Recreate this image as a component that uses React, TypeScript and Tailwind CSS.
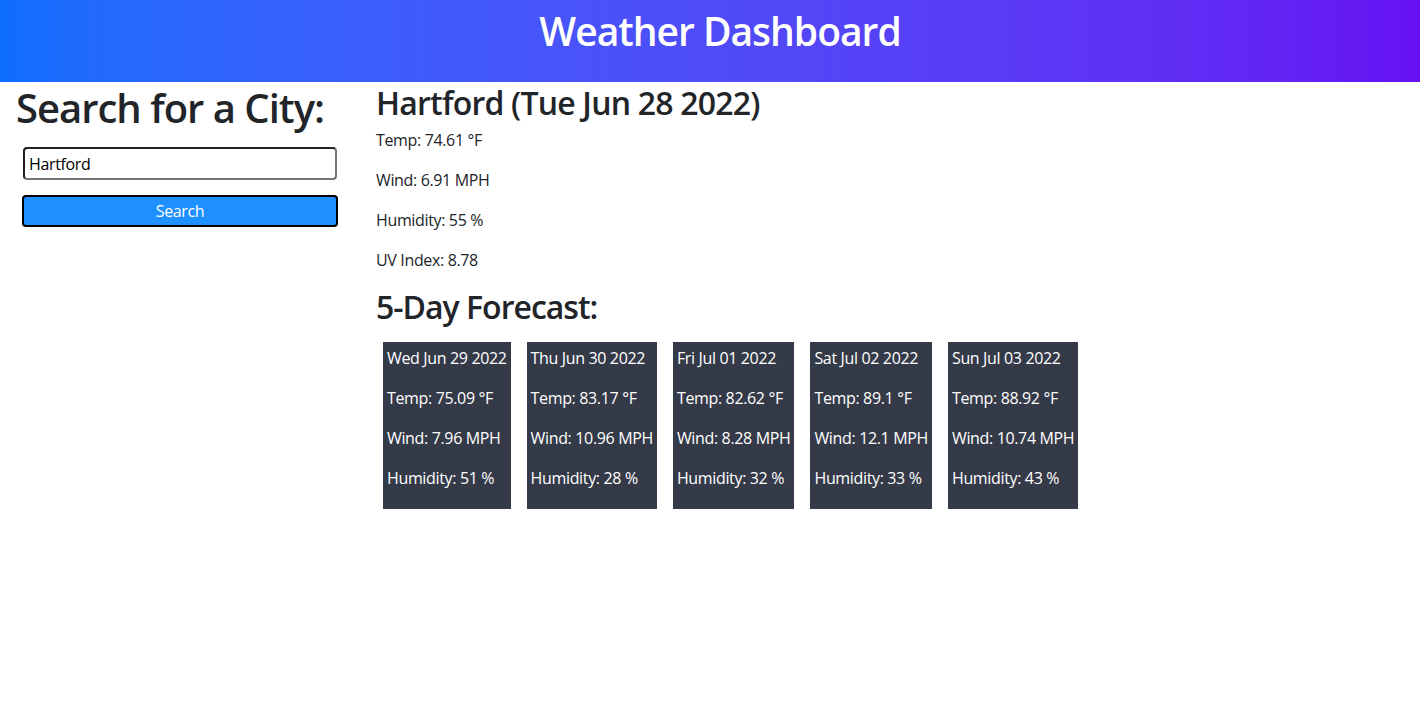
import React from 'react';

const forecast = [
  { date: 'Wed Jun 29 2022', temp: '75.09', wind: '7.96', humidity: '51' },
  { date: 'Thu Jun 30 2022', temp: '83.17', wind: '10.96', humidity: '28' },
  { date: 'Fri Jul 01 2022', temp: '82.62', wind: '8.28', humidity: '32' },
  { date: 'Sat Jul 02 2022', temp: '89.1', wind: '12.1', humidity: '33' },
  { date: 'Sun Jul 03 2022', temp: '88.92', wind: '10.74', humidity: '43' },
];

const App: React.FC = () => {
  return (
    <div className="min-h-screen bg-white text-[#212529] font-['Open_Sans',sans-serif] text-base tracking-[-0.35px]">
      <header className="h-[82px] flex justify-center pl-5 bg-gradient-to-r from-[#0d6efd] to-[#6610f2]">
        <h1 className="mt-[7px] text-[39px] leading-[48px] font-semibold tracking-[-1px] text-white">Weather Dashboard</h1>
      </header>

      <main className="flex">
        {/* search column */}
        <aside className="w-[360px] shrink-0 px-4">
          <h2 className="text-[40px] leading-[52px] font-semibold tracking-[-1px]">Search for a City:</h2>
          <div className="mt-[13px] px-[7px] flex flex-col gap-[15px]">
            <input
              defaultValue="Hartford"
              className="h-[33px] w-full px-1 rounded-[4px] border-2 border-[#222] border-r-[#767676] border-b-[#767676] text-black outline-none"
            />
            <button className="h-[32px] -mx-px rounded-[4px] border-2 border-black bg-[#1e90ff] text-white">
              Search
            </button>
          </div>
        </aside>

        {/* current weather */}
        <section className="flex-1 pl-4">
          <h2 className="mt-[2px] text-[32px] leading-[38px] font-semibold tracking-[-0.8px]">Hartford (Tue Jun 28 2022)</h2>
          <div className="mt-[6px]">
            <p className="mb-4 leading-6">Temp: 74.61 °F</p>
            <p className="mb-4 leading-6">Wind: 6.91 MPH</p>
            <p className="mb-4 leading-6">Humidity: 55 %</p>
            <p className="mb-4 leading-6">UV Index: 8.78</p>
          </div>
          <h3 className="mt-[3px] text-[32px] leading-[38px] font-semibold tracking-[-1px]">5-Day Forecast:</h3>
          <div className="mt-[16px] ml-[7px] flex gap-4">
            {forecast.map((day) => (
              <div key={day.date} className="bg-[#353a48] text-white px-1 pt-1 pb-[3px]">
                <p className="mb-4 leading-6">{day.date}</p>
                <p className="mb-4 leading-6">Temp: {day.temp} °F</p>
                <p className="mb-4 leading-6">Wind: {day.wind} MPH</p>
                <p className="mb-4 leading-6">Humidity: {day.humidity} %</p>
              </div>
            ))}
          </div>
        </section>
      </main>
    </div>
  );
};

export default App;
